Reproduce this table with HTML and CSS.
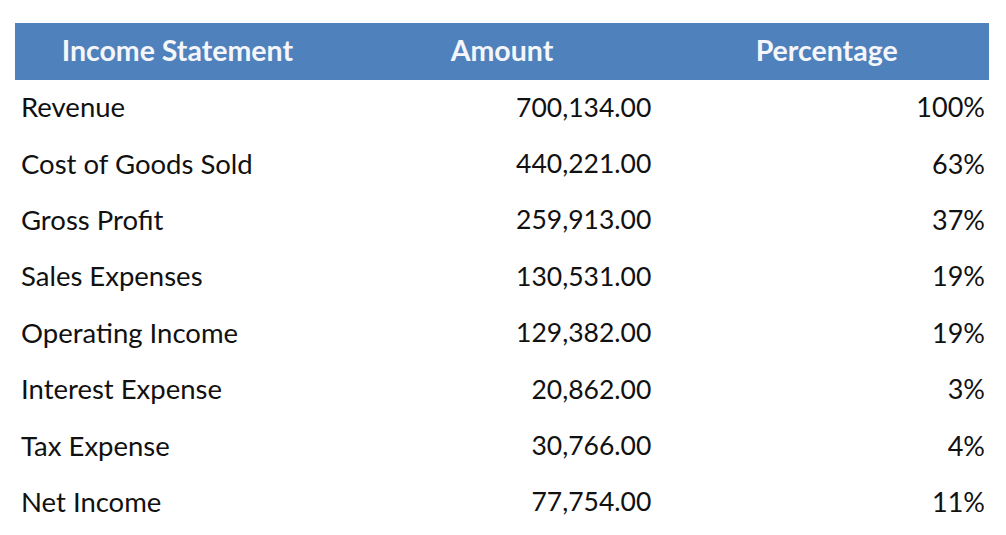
FILE: index.html
```html
<!DOCTYPE html>
<html>
<head>
<meta charset="utf-8">
<link rel="stylesheet" href="styles.css">
</head>
<body>
<div class="table">
  <div class="head">
    <div class="hcell">Income Statement</div>
    <div class="hcell">Amount</div>
    <div class="hcell">Percentage</div>
  </div>
  <div class="row"><div class="label">Revenue</div><div class="amt">700,134.00</div><div class="pct">100%</div></div>
  <div class="row"><div class="label">Cost of Goods Sold</div><div class="amt">440,221.00</div><div class="pct">63%</div></div>
  <div class="row"><div class="label">Gross Profit</div><div class="amt">259,913.00</div><div class="pct">37%</div></div>
  <div class="row"><div class="label">Sales Expenses</div><div class="amt">130,531.00</div><div class="pct">19%</div></div>
  <div class="row"><div class="label">Operating Income</div><div class="amt">129,382.00</div><div class="pct">19%</div></div>
  <div class="row"><div class="label">Interest Expense</div><div class="amt">20,862.00</div><div class="pct">3%</div></div>
  <div class="row"><div class="label">Tax Expense</div><div class="amt">30,766.00</div><div class="pct">4%</div></div>
  <div class="row"><div class="label">Net Income</div><div class="amt">77,754.00</div><div class="pct">11%</div></div>
</div>
</body>
</html>
```
FILE: styles.css
```css
html, body {
  margin: 0;
  padding: 0;
  background: #ffffff;
}
body {
  font-family: Lato, "Open Sans", sans-serif;
  color: #111111;
}
.table {
  margin: 23px 0 0 15px;
  width: 974px;
}
.head, .row {
  display: grid;
  grid-template-columns: 1fr 1fr 1fr;
  align-items: center;
}
.head {
  height: 57px;
  background: #4f81bd;
  color: #f4f6f9;
  font-weight: bold;
  font-size: 28.5px;
}
.hcell {
  text-align: center;
  padding-bottom: 3px;
}
.row {
  height: 56.4px;
  font-size: 27px;
}
.row > div {
  padding-bottom: 3px;
}
.label {
  padding-left: 6px;
  font-size: 27.5px;
}
.amt {
  text-align: right;
  padding-right: 13px;
  font-size: 26.5px;
}
.pct {
  text-align: right;
  padding-right: 4px;
}
```
